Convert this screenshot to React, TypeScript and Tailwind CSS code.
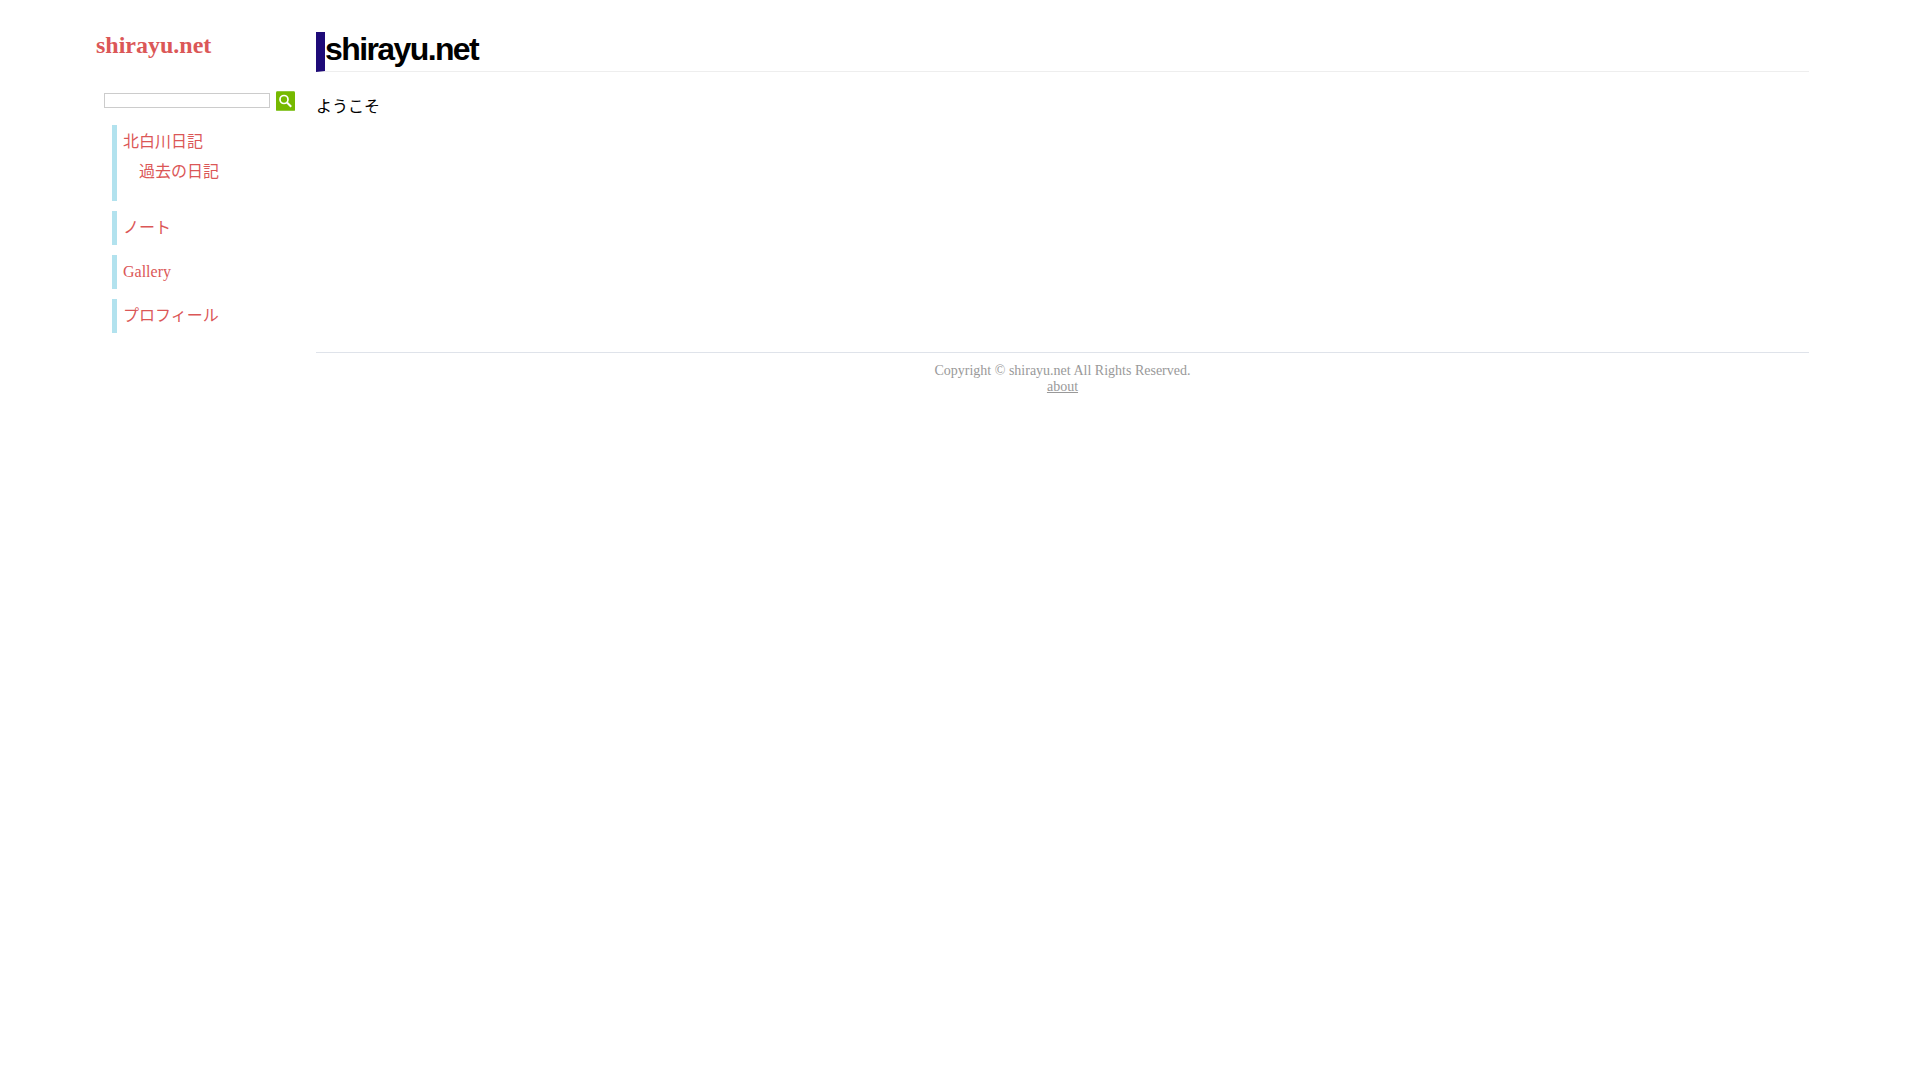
const navItem = "border-l-[5px] border-[#b2e2ee] pl-1.5 pt-[3px] leading-7";

export default function App() {
  return (
    <div className="flex px-[5%] pt-8 font-['Liberation_Serif','Noto_Sans_CJK_JP',serif] text-base text-black">
      <aside className="w-[220px] shrink-0">
        <div className="text-2xl leading-[26px] font-bold text-[#db5757]">
          <a href="#home">shirayu.net</a>
        </div>
        <form className="mt-[33px] ml-2 flex items-start gap-1.5" onSubmit={(e) => e.preventDefault()}>
          <input
            type="text"
            aria-label="Search"
            className="mt-0.5 h-[15px] w-[166px] border border-[#cccccc] bg-white px-1 text-xs outline-none"
          />
          <button type="submit" aria-label="Search" className="h-5 w-[19px]">
            <svg viewBox="0 0 19 20" className="block h-5 w-[19px]">
              <rect width="19" height="20" rx="1.5" fill="#76b900" />
              <path d="M1 .5h17M.5 19.5h18" stroke="#91c93c" />
              <circle cx="8" cy="8.5" r="4" fill="none" stroke="#fff" strokeWidth="1.7" />
              <path d="M11 11.5l4.2 4.2" stroke="#fff" strokeWidth="2" />
            </svg>
          </button>
        </form>
        <nav className="mt-3.5 ml-4">
          <ul className="flex flex-col gap-2.5 text-[#db5757]">
            <li className={`${navItem} pb-[15px]`}>
              <a href="#diary">北白川日記</a>
              <ul className="pl-4">
                <li className="pt-0.5">
                  <a href="#archive">過去の日記</a>
                </li>
              </ul>
            </li>
            <li className={`${navItem} pb-[3px]`}>
              <a href="#notes">ノート</a>
            </li>
            <li className={`${navItem} pb-[3px]`}>
              <a href="#gallery">Gallery</a>
            </li>
            <li className={`${navItem} pb-[3px]`}>
              <a href="#profile">プロフィール</a>
            </li>
          </ul>
        </nav>
      </aside>
      <div className="mr-[15px] min-w-0 grow">
        <main className="min-h-[320px]">
          <h1 className="border-b border-l-[9px] border-b-[#eeeeee] border-l-[#1e0a78] pb-1 font-['Liberation_Sans',sans-serif] text-[32px] leading-[35px] font-bold tracking-tighter">
            shirayu.net
          </h1>
          <p className="mt-[23px] leading-6">ようこそ</p>
        </main>
        <footer className="border-t border-[#dfe3ea] pt-2.5 text-center text-sm leading-4 text-[#999999]">
          <p>Copyright © shirayu.net All Rights Reserved.</p>
          <a href="#about" className="underline">about</a>
        </footer>
      </div>
    </div>
  );
}
